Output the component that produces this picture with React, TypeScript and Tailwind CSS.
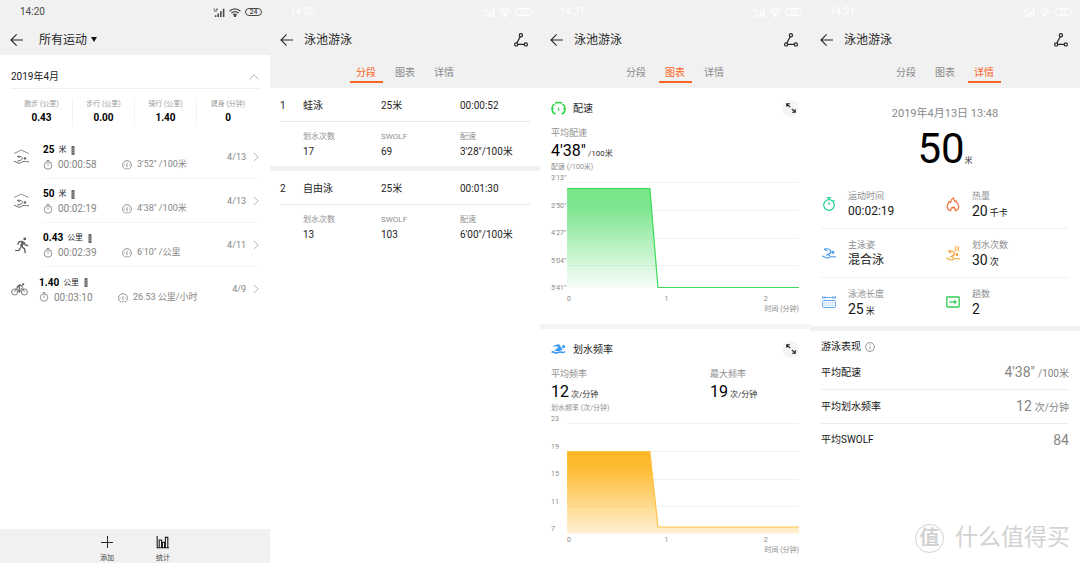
import { useId } from 'react'
import type { ReactNode } from 'react'

type TabName = '分段' | '图表' | '详情'

const tabs: TabName[] = ['分段', '图表', '详情']

function StatusBar({ time, battery, faint = false }: { time: string; battery: string; faint?: boolean }) {
  return (
    <div className={`flex h-6 items-center justify-between pr-2 pl-5 ${faint ? 'text-white' : 'text-[#4a4a4a]'}`}>
      <span className="text-[10px] leading-3">{time}</span>
      <div className="flex items-center gap-1">
        <svg viewBox="0 0 12 9" className="h-[9px] w-3" fill="none" stroke="currentColor">
          <path d="M0.5 1.2h1.6M3 1.2h2M1 3h3" strokeWidth="1" />
          <path d="M2.6 9V7.2M5.2 9V5.6M7.8 9V3.2M10.6 9V0.8" strokeWidth="1.6" />
        </svg>
        <svg viewBox="0 0 12 9" className="h-[9px] w-3" fill="none" stroke="currentColor" strokeWidth="1.3">
          <path d="M0.6 3.2C3.6 0.1 8.4 0.1 11.4 3.2M2.5 5.2c2-2 5-2 7 0M4.3 7c1-1 2.4-1 3.4 0" />
          <circle cx="6" cy="8" r="0.6" fill="currentColor" />
        </svg>
        <span className="flex h-2 w-[17px] items-center justify-center rounded-full border border-current text-[7px] leading-none font-medium">
          {battery}
        </span>
      </div>
    </div>
  )
}

function BackButton() {
  return (
    <button aria-label="返回" className="flex h-5 w-4 items-center">
      <svg viewBox="0 0 14 14" className="h-[14px] w-[14px]" fill="none" stroke="#262626" strokeWidth="1.1">
        <path d="M13 7H1.2M6.6 1.4L1 7l5.6 5.6" />
      </svg>
    </button>
  )
}

function DetailHeader({ time, active }: { time: string; active: TabName }) {
  return (
    <header className="bg-[#f1f1f1] pb-[5px]">
      <StatusBar time={time} battery="23" faint />
      <div className="flex h-[31px] items-center px-[10px]">
        <BackButton />
        <h1 className="ml-2 flex-1 text-[12px] leading-4 text-[#262626]">泳池游泳</h1>
        <button aria-label="轨迹" className="flex h-5 w-4 items-center">
          <svg viewBox="0 0 14 14" className="h-[14px] w-[14px]" fill="none" stroke="#262626" strokeWidth="1.2">
            <circle cx="6.9" cy="2.2" r="1.6" />
            <circle cx="2.2" cy="11.4" r="1.6" />
            <circle cx="11.8" cy="11.4" r="1.6" />
            <path d="M6.2 3.7L2.9 9.9M3.8 11.4h6.4" />
          </svg>
        </button>
      </div>
      <nav className="flex justify-center gap-[6px] pt-[10px]">
        {tabs.map((tab) => (
          <button
            key={tab}
            className={`w-[33px] border-b-2 text-[10px] leading-4 ${
              tab === active ? 'border-[#fb6522] text-[#fb6522]' : 'border-transparent text-[#8a8a8a]'
            }`}
          >
            {tab}
          </button>
        ))}
      </nav>
    </header>
  )
}

/* ---------- workout list ---------- */

const totals = [
  { label: '跑步 (公里)', value: '0.43' },
  { label: '步行 (公里)', value: '0.00' },
  { label: '骑行 (公里)', value: '1.40' },
  { label: '健身 (分钟)', value: '0' },
]

const workouts = [
  { kind: 'swim', value: '25', unit: '米', time: '00:00:58', pace: '3\'52" /100米', date: '4/13' },
  { kind: 'swim', value: '50', unit: '米', time: '00:02:19', pace: '4\'38" /100米', date: '4/13' },
  { kind: 'run', value: '0.43', unit: '公里', time: '00:02:39', pace: '6\'10" /公里', date: '4/11' },
  { kind: 'ride', value: '1.40', unit: '公里', time: '00:03:10', pace: '26.53 公里/小时', date: '4/9' },
]

function WorkoutIcon({ kind }: { kind: string }) {
  if (kind === 'swim') {
    return (
      <svg viewBox="0 0 17 16" className="h-4 w-[17px]" fill="none" stroke="#6b6b6b" strokeWidth="1">
        <path d="M1 4.6L8.3 1l7.3 3.6" stroke="#8f8f8f" />
        <path d="M4 7.400c2.400-.5 4.400-.1 5.200 1.200.8 1.400-.6 2.200-2 2.800l-3 .9M4 7.400l3 1.200" />
        <path d="M0.800 12.200c2 .2 3 2 5.400 2s2.800-1.800 5-1.800 2.400.8 4.800.2" />
        <circle cx="12" cy="9.400" r="0.900" fill="#6b6b6b" />
      </svg>
    )
  }
  if (kind === 'run') {
    return (
      <svg viewBox="0 0 16 18" className="h-[17px] w-4" fill="none" stroke="#5c5c5c" strokeLinejoin="round">
        <circle cx="10.900" cy="2" r="1.500" fill="#5c5c5c" stroke="none" />
        <path d="M9.400 4.800L7 10.200" strokeWidth="2.800" />
        <path
          d="M8.800 4.600L5 5 3.200 8M10 5.600l1.600 3 3 .4M7.400 10l3.400 2.600.6 4.400M6.600 10.800l-1.800 3.400-4 .2"
          strokeWidth="1.400"
        />
      </svg>
    )
  }
  return (
    <svg viewBox="0 0 17 13" className="h-[13px] w-[17px]" fill="none" stroke="#6b6b6b">
      <circle cx="3.600" cy="9" r="3" strokeWidth="0.900" />
      <circle cx="13.400" cy="9" r="3" strokeWidth="0.900" />
      <path d="M3.600 9l2-4.400M11.400 4l2 5M5.600 5l3 4.400 2.800-5" strokeWidth="0.800" />
      <path d="M5.800 4.400L8.600 2l2.800 1.400M8 3.200l.6 3.200-.8 3" strokeWidth="1.500" />
      <circle cx="12.200" cy="1.400" r="1.100" fill="#5c5c5c" stroke="none" />
    </svg>
  )
}

function WorkoutList() {
  return (
    <section className="flex min-h-screen flex-col bg-white">
      <header className="bg-[#f1f1f1]">
        <StatusBar time="14:20" battery="24" />
        <div className="flex h-[31px] items-center px-[10px]">
          <BackButton />
          <button className="ml-[13px] flex items-center gap-1 text-[12px] leading-4 text-[#262626]">
            所有运动
            <svg viewBox="0 0 6 5" className="h-[5px] w-[6px]">
              <path d="M0 0h6L3 5z" fill="#111" />
            </svg>
          </button>
        </div>
      </header>

      <button className="mx-[11px] flex h-[34px] items-center justify-between border-b border-[#efefef] pt-[10px]">
        <span className="text-[10px] leading-3 text-[#1c1c1c]">2019年4月</span>
        <svg viewBox="0 0 10 6" className="h-[6px] w-[10px]" fill="none" stroke="#b5b5b5">
          <path d="M0.500 5.500L5 0.800l4.500 4.700" />
        </svg>
      </button>

      <dl className="mx-[11px] mt-[10px] mb-[9px] grid grid-cols-4 divide-x divide-[#f3f3f3]">
        {totals.map((item) => (
          <div key={item.label} className="flex h-[27px] flex-col items-center">
            <dt className="text-[7px] leading-[11px] text-[#9a9a9a]">{item.label}</dt>
            <dd className="text-[10px] leading-4 font-bold text-black">{item.value}</dd>
          </div>
        ))}
      </dl>

      <ul>
        {workouts.map((w, i) => (
          <li key={i}>
            <a href="#detail" className="flex h-11 items-center px-[11px]">
              <span className={`flex justify-center ${w.kind === 'ride' ? 'w-[17px]' : 'w-[21px]'}`}>
                <WorkoutIcon kind={w.kind} />
              </span>
              <span
                className={`ml-[11px] flex h-11 flex-1 items-center ${i < workouts.length - 1 ? 'border-b border-[#f3f3f3]' : ''}`}
              >
                <span className="w-[79px] pt-[2px]">
                  <span className="flex items-center leading-[14px]">
                    <b className="text-[10px] font-bold text-black">{w.value}</b>
                    <span className="ml-1 text-[8px] text-[#222]">{w.unit}</span>
                    <svg viewBox="0 0 4 9" className="ml-[5px] h-[9px] w-1">
                      <path d="M0.500 0h3v9h-3z" fill="#6a6a6a" />
                      <path d="M0 2.500h4M0 4.500h4M0 6.500h4" stroke="#aaa" strokeWidth="0.600" />
                    </svg>
                  </span>
                  <span className="flex items-center text-[10px] leading-[15px] text-[#858585]">
                    <svg viewBox="0 0 10 10" className="mr-[5px] h-[10px] w-[10px]" fill="none" stroke="currentColor" strokeWidth="0.900">
                      <circle cx="5" cy="5.600" r="3.700" />
                      <path d="M3.500 0.600h3M5 0.600v1.300M5 3.500v2.300M8 1.800l.8.8" />
                    </svg>
                    {w.time}
                  </span>
                </span>
                <span className="flex flex-1 items-center self-end pb-[6px] text-[9px] leading-[15px] text-[#858585]">
                  <svg viewBox="0 0 10 10" className="mr-[5px] h-[10px] w-[10px]" fill="none" stroke="currentColor" strokeWidth="0.900">
                    <path d="M3.600 8.800H2.600A4.400 4.400 0 1 1 7.400 8.800H6.400M5 3.200v4M2.200 5.200h.8M7 5.200h.8" />
                    <path d="M4.200 8.800h1.600" />
                  </svg>
                  {w.pace}
                </span>
                <span className="text-[9px] leading-3 text-[#858585]">{w.date}</span>
                <svg viewBox="0 0 6 10" className="ml-[7px] h-[10px] w-[6px]" fill="none" stroke="#b5b5b5">
                  <path d="M0.800 0.800L5.200 5 0.800 9.200" />
                </svg>
              </span>
            </a>
          </li>
        ))}
      </ul>

      <footer className="mt-auto flex h-[34px] justify-center gap-7 bg-[#f1f1f1] pt-[6px] text-[7px] text-[#444]">
        <button className="flex w-7 flex-col items-center gap-1 leading-[10px]">
          <svg viewBox="0 0 14 14" className="h-[14px] w-[14px]" fill="none" stroke="#262626">
            <path d="M1 7.500h12M7.500 1v12" />
          </svg>
          添加
        </button>
        <button className="flex w-7 flex-col items-center gap-1 leading-[10px]">
          <svg viewBox="0 0 14 14" className="h-[14px] w-[14px]" fill="none" stroke="#1a1a1a" strokeWidth="1.100">
            <path d="M1.200 1v11.800H13M3.200 12.500V5h2.400v7.500M6.400 12.500V7.200h2.200v5.300M9.400 12.500V2.400h2.400v10.100" />
          </svg>
          统计
        </button>
      </footer>
    </section>
  )
}

/* ---------- laps ---------- */

const laps = [
  { stroke: '蛙泳', distance: '25米', time: '00:00:52', strokes: '17', swolf: '69', pace: '3\'28"/100米' },
  { stroke: '自由泳', distance: '25米', time: '00:01:30', strokes: '13', swolf: '103', pace: '6\'00"/100米' },
]

function LapStat({ label, value }: { label: string; value: string }) {
  return (
    <div>
      <dt className="text-[8px] leading-[14px] text-[#8f8f8f]">{label}</dt>
      <dd className="text-[10px] leading-[15px] text-[#262626]">{value}</dd>
    </div>
  )
}

function LapsPanel() {
  return (
    <section className="min-h-screen bg-white">
      <DetailHeader time="14:20" active="分段" />
      {laps.map((lap, i) => (
        <article key={lap.stroke} className={i < laps.length - 1 ? 'border-b-[5px] border-[#f1f1f1]' : ''}>
          <div className="mx-[10px] grid h-[34px] grid-cols-[23px_78px_79px_1fr] items-center border-b border-[#e6e6e6] pt-[2px] text-[10px] leading-3 text-[#262626]">
            <span>{i + 1}</span>
            <span>{lap.stroke}</span>
            <span>{lap.distance}</span>
            <span>{lap.time}</span>
          </div>
          <dl className="mr-[10px] ml-[33px] grid h-11 grid-cols-[78px_79px_1fr] pt-2">
            <LapStat label="划水次数" value={lap.strokes} />
            <LapStat label="SWOLF" value={lap.swolf} />
            <LapStat label="配速" value={lap.pace} />
          </dl>
        </article>
      ))}
    </section>
  )
}

/* ---------- charts ---------- */

interface ChartCardProps {
  icon: ReactNode
  title: string
  stats: { label: string; value: string; unit: string }[]
  axis: string
  ticks: string[]
  color: string
  lineColor: string
  topOpacity: number
  bottomOpacity: number
  high: number
  low: number
  base: number
}

function ChartCard(props: ChartCardProps) {
  const { icon, title, stats, axis, ticks, color, lineColor, topOpacity, bottomOpacity, high, low, base } = props
  const gradient = useId()
  const line = `16,${high} 98.500,${high} 106.500,${low} 247,${low}`

  return (
    <article className="px-[11px] pt-[10px]">
      <div className="flex h-5 items-center">
        <span className="flex w-[22px]">{icon}</span>
        <h2 className="flex-1 pt-[2px] text-[10px] leading-3 text-[#262626]">{title}</h2>
        <button aria-label="全屏" className="flex h-[17px] w-[17px] items-center justify-center rounded-full bg-[#f5f5f5]">
          <svg viewBox="0 0 10 10" className="h-[10px] w-[10px]" fill="none" stroke="#1a1a1a" strokeWidth="1.100">
            <path d="M0.800 3.800v-3h3M0.800 0.800l3.400 3.400M9.200 6.200v3h-3M9.200 9.200L5.800 5.800" />
          </svg>
        </button>
      </div>

      <dl className="mt-[9px] grid grid-cols-[159px_1fr]">
        {stats.map((s) => (
          <div key={s.label}>
            <dt className="text-[9px] leading-3 text-[#8f8f8f]">{s.label}</dt>
            <dd className="flex h-6 items-baseline gap-[2px] text-[16px] leading-6 text-black">
              {s.value}
              <span className="text-[8px] text-[#333]">{s.unit}</span>
            </dd>
          </div>
        ))}
      </dl>
      <p className="text-[7px] leading-[9px] text-[#8f8f8f]">{axis}</p>

      <div className="relative mt-[2px]">
        <svg viewBox="0 0 247 119" preserveAspectRatio="none" className="block h-[119px] w-full">
          <defs>
            <linearGradient id={gradient} x1="0" y1="0" x2="0" y2="1">
              <stop offset="0" stopColor={color} stopOpacity={topOpacity} />
              <stop offset="0.200" stopColor={color} stopOpacity={topOpacity * 0.95} />
              <stop offset="1" stopColor={color} stopOpacity={bottomOpacity} />
            </linearGradient>
          </defs>
          <path d="M16 8.500h231M16 36.500h231M16 64.500h231M16 91.500h231" stroke="#f1f1f1" />
          <polygon points={`${line} 247,${base} 16,${base}`} fill={`url(#${gradient})`} />
          <polyline points={line} fill="none" stroke={lineColor} strokeWidth="1.200" />
        </svg>
        <div className="absolute inset-y-0 left-0 flex flex-col justify-between text-[7px] leading-[9px] text-[#8a8a8a]">
          {ticks.map((t) => (
            <span key={t}>{t}</span>
          ))}
        </div>
      </div>
      <div className="mt-[2px] ml-4 grid grid-cols-[97fr_99fr_35fr] text-[7px] leading-[9px] text-[#8a8a8a]">
        <span>0</span>
        <span>1</span>
        <span>2</span>
      </div>
      <p className="text-right text-[7px] leading-[10px] text-[#8a8a8a]">时间 (分钟)</p>
    </article>
  )
}

function ChartsPanel() {
  return (
    <section className="min-h-screen bg-white">
      <DetailHeader time="14:21" active="图表" />
      <ChartCard
        icon={
          <svg viewBox="0 0 15 14" className="h-[14px] w-[15px]" fill="none" stroke="#1fd336">
            <path d="M4.600 12.400H3A6.300 6.300 0 0 1 3 3.200" strokeWidth="1.500" />
            <path d="M4 2.300A6.400 6.400 0 0 1 7 1.200M8.200 1.200A6.400 6.400 0 0 1 11.200 2.400M12.100 3.200a6.300 6.300 0 0 1 0 9.200h-1.600" strokeWidth="1.500" />
            <path d="M7.600 1v2.200M1.400 7.600h1.800M12 7.600h1.800M3.400 3.200l1.100 1.200M11.700 3.200l-1.100 1.200" strokeWidth="0.900" />
            <path d="M7.600 5.400l.8 4.400H6.800z" fill="#1fd336" stroke="none" />
          </svg>
        }
        title="配速"
        stats={[{ label: '平均配速', value: '4\'38"', unit: '/100米' }]}
        axis="配速 (/100米)"
        ticks={['3\'13"', '3\'50"', '4\'27"', '5\'04"', '5\'41"']}
        color="#78e58a"
        lineColor="#3fd95b"
        topOpacity={1}
        bottomOpacity={0.05}
        high={14.5}
        low={113.5}
        base={113.5}
      />
      <div className="mt-[10px] h-[5px] bg-[#f4f4f4]" />
      <ChartCard
        icon={
          <svg viewBox="0 0 15 10" className="h-[10px] w-[15px]" fill="#3d9bf5">
            <path d="M2.400 1.800L7 .2c.7-.2 1.100 0 1.500.6l3.300 5.200c-1.600-.2-2.600 1-4 1.200-1.700.2-2.800-.8-4.600-.8l4-2.800-1.200-1.400-3.400.6z" />
            <circle cx="12.600" cy="2.700" r="1.600" />
            <path d="M.6 7.200c1.800-.9 2.800.9 4.600.9s2.600-1.200 4.200-.9 3 .9 4.800-.1v1.500c-1.600.9-3 .6-4.600.3s-2.600.9-4.400.9S2.400 8.200.6 8.900z" />
          </svg>
        }
        title="划水频率"
        stats={[
          { label: '平均频率', value: '12', unit: '次/分钟' },
          { label: '最大频率', value: '19', unit: '次/分钟' },
        ]}
        axis="划水频率 (次/分钟)"
        ticks={['23', '19', '15', '11', '7']}
        color="#fdb827"
        lineColor="#fdc147"
        topOpacity={1}
        bottomOpacity={0.2}
        high={36.5}
        low={112}
        base={118.5}
      />
    </section>
  )
}

/* ---------- details ---------- */

const stopwatchIcon = (
  <svg viewBox="0 0 14 14" className="h-[14px] w-[14px]" fill="none" stroke="#22cf95" strokeWidth="1.200">
    <circle cx="7" cy="8" r="5.300" />
    <path d="M4.800 0.700h4.400M7 0.700v2M7 5v3M11.300 2.900l.9.900" />
  </svg>
)

const flameIcon = (
  <svg viewBox="0 0 14 15" className="h-[15px] w-[14px]" fill="none" stroke="#f4713a" strokeWidth="1.200" strokeLinejoin="round">
    <path d="M5 13.800C2.600 13.200 1.200 11.500 1.200 9.400c0-2.200 1.600-3 1.900-5l1.500 1C4.700 3.400 5.600 1.800 7.400.8c0 2 .6 2.700 1.700 3.800l1-.8c.3 2 2.600 3 2.600 5.600 0 2.100-1.400 3.800-3.700 4.400" />
    <path d="M5 13.800c-.6-1.400 0-2.500 1.100-3.600l1 1 .9-1.200c1.200 1.200 1.600 2.500 1 3.800" />
  </svg>
)

const strokeStyleIcon = (
  <svg viewBox="0 0 14 11" className="h-[11px] w-[14px]" fill="none" stroke="#4c9bf0" strokeWidth="1.200">
    <path d="M2.200 1.200C5 .4 7.400.9 8.400 2.400c.9 1.500.1 2.600-1.400 3.400L4 7.200M2.200 1.200L5.400 3M6 6.400l2 1.400" />
    <circle cx="11" cy="4.200" r="0.900" fill="#4c9bf0" />
    <path d="M.4 8.100c1.800.2 2.600 1.900 4.600 1.900s2.800-1.500 4.600-1.500 2.200.8 4.200.3" />
  </svg>
)

const strokeCountIcon = (
  <svg viewBox="0 0 14 15" className="h-[15px] w-[14px]" fill="none" stroke="#f5a13a" strokeWidth="1.200">
    <path d="M2.200 5.200C5 4.400 7 4.900 8 6.400c.9 1.500.1 2.600-1.400 3.400L4 11.200M2.200 5.200L5.200 7M6 10.400l2 1.400" />
    <circle cx="11" cy="8.400" r="0.900" fill="#f5a13a" />
    <path d="M.4 12.100c1.800.2 2.600 1.900 4.600 1.900s2.800-1.500 4.600-1.500 2.200.8 4.200.3" />
    <path d="M8.600 1h4.800M8.600 2.800h4.800M8.600 4.600h4.800M9.400.4v5M12.400.4v5" strokeWidth="0.600" />
  </svg>
)

const poolIcon = (
  <svg viewBox="0 0 14 12" className="h-3 w-[14px]" fill="none" stroke="#5aa3f4">
    <path d="M0.700 0v3M13.300 0v3M1 1.500h12M3.500 0.300L2 1.500l1.500 1.200M10.500 0.300L12 1.500l-1.500 1.200" strokeWidth="0.900" />
    <rect x="0.700" y="4.500" width="12.600" height="7" rx="0.800" />
    <path d="M2 6.800h10M2 9.200h10" strokeWidth="0.900" strokeDasharray="1.300 0.700" opacity="0.700" />
  </svg>
)

const lapsIcon = (
  <svg viewBox="0 0 14 12" className="h-3 w-[14px]" fill="none" stroke="#32cc55" strokeWidth="1.300">
    <rect x="0.800" y="1" width="12.400" height="10" rx="0.800" />
    <path d="M3.400 6h6.400" />
    <path d="M8.400 3.600L11 6 8.400 8.400z" fill="#32cc55" stroke="none" />
  </svg>
)

const metrics = [
  [
    { icon: stopwatchIcon, label: '运动时间', value: '00:02:19', unit: '', small: true },
    { icon: flameIcon, label: '热量', value: '20', unit: '千卡', small: false },
  ],
  [
    { icon: strokeStyleIcon, label: '主泳姿', value: '混合泳', unit: '', small: true },
    { icon: strokeCountIcon, label: '划水次数', value: '30', unit: '次', small: false },
  ],
  [
    { icon: poolIcon, label: '泳池长度', value: '25', unit: '米', small: false },
    { icon: lapsIcon, label: '趟数', value: '2', unit: '', small: false },
  ],
]

const performance = [
  { label: '平均配速', value: '4\'38"', unit: '/100米' },
  { label: '平均划水频率', value: '12', unit: '次/分钟' },
  { label: '平均SWOLF', value: '84', unit: '' },
]

function DetailsPanel() {
  return (
    <section className="flex min-h-screen flex-col bg-white">
      <DetailHeader time="14:21" active="详情" />
      <div className="flex h-[92px] flex-col items-center pt-[19px]">
        <p className="text-[11px] leading-[14px] text-[#8a8a8a]">2019年4月13日 13:48</p>
        <p className="mt-[3px] text-[42px] leading-[50px] text-black">
          50<span className="text-[8px] text-[#333]">米</span>
        </p>
      </div>

      <div className="border-b-[5px] border-[#f1f1f1] px-[11px]">
        {metrics.map((row, i) => (
          <dl
            key={i}
            className={`grid grid-cols-2 items-center ${i < metrics.length - 1 ? 'h-[49px] border-b border-[#f1f1f1]' : 'h-12'}`}
          >
            {row.map((m) => (
              <div key={m.label} className="flex items-center">
                <span className="flex w-[27px] pl-px">{m.icon}</span>
                <div>
                  <dt className="text-[9px] leading-[14px] text-[#8f8f8f]">{m.label}</dt>
                  <dd
                    className={`flex h-4 items-baseline gap-[2px] leading-4 text-[#161616] ${m.small ? 'text-[12px]' : 'text-[14px]'}`}
                  >
                    {m.value}
                    {m.unit && <span className="text-[9px]">{m.unit}</span>}
                  </dd>
                </div>
              </div>
            ))}
          </dl>
        ))}
      </div>

      <h2 className="mx-[11px] flex items-center gap-1 pt-[7px] text-[10px] leading-[18px] text-[#222]">
        游泳表现
        <svg viewBox="0 0 10 10" className="h-[10px] w-[10px]" fill="none" stroke="#8a8a8a" strokeWidth="0.900">
          <circle cx="5" cy="5" r="4.400" />
          <path d="M5 4.400v3M5 2.400v1" />
        </svg>
      </h2>
      <dl className="mx-[11px]">
        {performance.map((p, i) => (
          <div
            key={p.label}
            className={`flex items-center justify-between ${i < performance.length - 1 ? 'h-[34px] border-b border-[#ededed]' : 'h-8'}`}
          >
            <dt className="text-[10px] leading-4 text-[#161616]">{p.label}</dt>
            <dd className="text-[14px] leading-4 text-[#858585]">
              {p.value}
              {p.unit && <span className="ml-[3px] text-[10px]">{p.unit}</span>}
            </dd>
          </div>
        ))}
      </dl>

      <div className="mt-auto flex items-center justify-end gap-[11px] pr-[10px] pb-[9px] text-[#d2d2d2]">
        <span className="flex h-[29px] w-[29px] items-center justify-center rounded-full border border-current text-[20px] leading-none font-bold">
          值
        </span>
        <span className="text-[23px] leading-8">什么值得买</span>
      </div>
    </section>
  )
}

export default function App() {
  return (
    <main className="grid grid-cols-4 bg-white font-[Roboto,'Noto_Sans_CJK_SC',sans-serif]">
      <WorkoutList />
      <LapsPanel />
      <ChartsPanel />
      <DetailsPanel />
    </main>
  )
}
